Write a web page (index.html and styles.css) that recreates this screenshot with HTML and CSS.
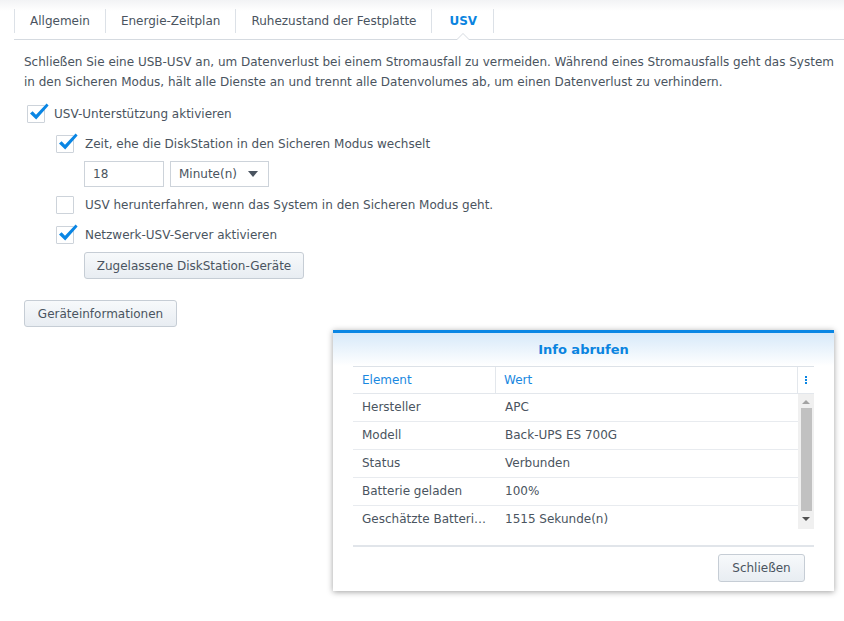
FILE: index.html
```html
<!DOCTYPE html>
<html lang="de">
<head>
<meta charset="utf-8">
<title>USV</title>
<link rel="stylesheet" href="styles.css">
</head>
<body>
<div class="page">
  <nav class="tabs">
    <div class="tab">Allgemein</div>
    <div class="tab">Energie-Zeitplan</div>
    <div class="tab">Ruhezustand der Festplatte</div>
    <div class="tab active">USV</div>
  </nav>
  <main class="content">
    <p class="desc">Schließen Sie eine USB-USV an, um Datenverlust bei einem Stromausfall zu vermeiden. Während eines Stromausfalls geht das System in den Sicheren Modus, hält alle Dienste an und trennt alle Datenvolumes ab, um einen Datenverlust zu verhindern.</p>

    <div class="row lvl0">
      <span class="cb checked"><svg class="tick" viewBox="0 0 22 20" width="22" height="20"><path d="M2 10.5 L4.6 8.3 L8 11.8 L18.6 0.6 L20.6 2.4 L8.2 16.6 Z"/></svg></span>
      <span class="lbl">USV-Unterstützung aktivieren</span>
    </div>
    <div class="row lvl1">
      <span class="cb checked"><svg class="tick" viewBox="0 0 22 20" width="22" height="20"><path d="M2 10.5 L4.6 8.3 L8 11.8 L18.6 0.6 L20.6 2.4 L8.2 16.6 Z"/></svg></span>
      <span class="lbl">Zeit, ehe die DiskStation in den Sicheren Modus wechselt</span>
    </div>
    <div class="fields">
      <div class="input">18</div>
      <div class="select"><span>Minute(n)</span><span class="caret"></span></div>
    </div>
    <div class="row lvl1">
      <span class="cb"></span>
      <span class="lbl">USV herunterfahren, wenn das System in den Sicheren Modus geht.</span>
    </div>
    <div class="row lvl1">
      <span class="cb checked"><svg class="tick" viewBox="0 0 22 20" width="22" height="20"><path d="M2 10.5 L4.6 8.3 L8 11.8 L18.6 0.6 L20.6 2.4 L8.2 16.6 Z"/></svg></span>
      <span class="lbl">Netzwerk-USV-Server aktivieren</span>
    </div>
    <div class="btnrow lvl1b">
      <button class="btn">Zugelassene DiskStation-Geräte</button>
    </div>
    <div class="btnrow main-btn">
      <button class="btn">Geräteinformationen</button>
    </div>
  </main>

  <section class="dialog">
    <header class="dlg-head">Info abrufen</header>
    <div class="grid">
      <div class="grid-head">
        <div class="c1">Element</div>
        <div class="c2">Wert</div>
        <div class="c3"><span class="dots"><i></i><i></i><i></i></span></div>
      </div>
      <div class="grid-body">
        <div class="rows">
          <div class="gr"><div class="c1">Hersteller</div><div class="c2">APC</div></div>
          <div class="gr"><div class="c1">Modell</div><div class="c2">Back-UPS ES 700G</div></div>
          <div class="gr"><div class="c1">Status</div><div class="c2">Verbunden</div></div>
          <div class="gr"><div class="c1">Batterie geladen</div><div class="c2">100%</div></div>
          <div class="gr"><div class="c1">Geschätzte Batterielaufzeit</div><div class="c2">1515 Sekunde(n)</div></div>
        </div>
        <div class="sbar">
          <span class="arr up"></span>
          <span class="thumb"></span>
          <span class="arr down"></span>
        </div>
      </div>
    </div>
    <footer class="dlg-foot">
      <button class="btn close">Schließen</button>
    </footer>
  </section>
</div>
</body>
</html>
```

FILE: styles.css
```css
html, body {
  margin: 0;
  padding: 0;
}
body {
  width: 844px;
  height: 621px;
  overflow: hidden;
  font-family: "DejaVu Sans", Verdana, sans-serif;
  font-size: 12px;
  color: #4a5460;
  background: #fff linear-gradient(#f2f3f5 0, #fff 11px) no-repeat;
}
.page {
  position: relative;
  height: 621px;
}

/* Tabs */
.tabs {
  display: flex;
  margin-left: 14px;
  border-bottom: 1px solid #d5dae0;
  padding-top: 9px;
  box-sizing: border-box;
  height: 40px;
}
.tab {
  position: relative;
  height: 24px;
  line-height: 24px;
  padding: 0 15px;
  border-left: 1px solid #dce1e7;
  color: #4a5460;
  white-space: nowrap;
}
.tab:last-child {
  border-right: 1px solid #dce1e7;
  padding: 0 16px 0 17px;
}
.tab.active {
  color: #0a84e0;
  font-weight: bold;
}
.tab.active::before,
.tab.active::after {
  content: "";
  position: absolute;
  left: 50%;
  width: 0;
  height: 0;
  border-style: solid;
}
.tab.active::before {
  bottom: -7px;
  margin-left: -7px;
  border-width: 0 7px 7px 7px;
  border-color: transparent transparent #d5dae0 transparent;
}
.tab.active::after {
  bottom: -7px;
  margin-left: -6px;
  border-width: 0 6px 6px 6px;
  border-color: transparent transparent #fff transparent;
}

/* Content */
.content {
  padding: 12px 24px 0 24px;
}
.desc {
  margin: 0;
  line-height: 20px;
  width: 812px;
}
.row {
  display: flex;
  align-items: center;
  height: 30px;
}
.row.lvl0 {
  margin-top: 7px;
  padding-left: 3px;
}
.row.lvl0 .lbl {
  margin-left: 9px;
}
.row.lvl1 {
  padding-left: 32px;
}
.fields {
  display: flex;
  gap: 6px;
  padding-left: 60px;
  margin-top: 2px;
  height: 26px;
  margin-bottom: 3px;
}
.cb {
  position: relative;
  box-sizing: border-box;
  width: 18px;
  height: 18px;
  border: 1px solid #cdd3da;
  border-radius: 1px;
  background: #fff;
  flex: none;
}
.tick {
  position: absolute;
  left: 0;
  top: -3px;
}
.tick path {
  fill: #0a86e4;
}
.lbl {
  margin-left: 11px;
  white-space: nowrap;
}
.input, .select {
  box-sizing: border-box;
  height: 26px;
  border: 1px solid #cdd3da;
  line-height: 24px;
  padding-left: 8px;
  background: #fff;
}
.input {
  width: 80px;
}
.select {
  width: 99px;
  display: flex;
  align-items: center;
  justify-content: space-between;
  padding-right: 10px;
}
.caret {
  width: 0;
  height: 0;
  border-style: solid;
  border-width: 6px 5px 0 5px;
  border-color: #4a5460 transparent transparent transparent;
}
.btnrow {
  display: flex;
}
.btnrow.lvl1b {
  padding-left: 60px;
  margin-top: 2px;
}
.btnrow.main-btn {
  margin-top: 21px;
}
.btn {
  box-sizing: border-box;
  height: 27px;
  padding: 0;
  white-space: nowrap;
  font-family: inherit;
  font-size: 12px;
  color: #4a5460;
  border: 1px solid #c6cdd5;
  border-radius: 3px;
  background: linear-gradient(#f7f9fb, #e8edf2);
  cursor: pointer;
}
.btnrow.lvl1b .btn {
  width: 220px;
}
.btnrow.main-btn .btn {
  width: 153px;
}

/* Dialog */
.dialog {
  position: absolute;
  left: 333px;
  top: 330px;
  width: 501px;
  height: 261px;
  box-sizing: border-box;
  border-top: 3px solid #0a86e4;
  background: #fff;
  box-shadow: 0 1px 6px rgba(0, 0, 0, 0.38);
  padding: 0 20px;
}
.dlg-head {
  margin: 0 -20px;
  height: 33px;
  line-height: 33px;
  text-align: center;
  font-weight: bold;
  font-size: 13px;
  color: #0a84e0;
  background: linear-gradient(#d7e9f9, #fff);
}
.grid {
  border-top: 1px solid #dde2e8;
}
.grid-head {
  display: flex;
  height: 26px;
  line-height: 26px;
  border-bottom: 1px solid #e3e7ec;
  color: #1a88e0;
}
.grid-head .c1 {
  box-sizing: border-box;
  width: 143px;
  padding-left: 9px;
  border-right: 1px solid #e3e7ec;
}
.grid-head .c2 {
  flex: 1;
  padding-left: 8px;
  border-right: 1px solid #e3e7ec;
}
.grid-head .c3 {
  width: 16px;
  display: flex;
  justify-content: center;
  align-items: center;
}
.dots {
  display: flex;
  flex-direction: column;
  gap: 1px;
}
.dots i {
  display: block;
  width: 2px;
  height: 2px;
  background: #0a86e4;
}
.grid-body {
  display: flex;
  height: 135px;
  overflow: hidden;
}
.rows {
  flex: 1;
  min-width: 0;
}
.gr {
  display: flex;
  height: 28px;
  line-height: 27px;
  border-bottom: 1px solid #e8ebef;
  box-sizing: border-box;
}
.gr .c1 {
  box-sizing: border-box;
  width: 143px;
  flex: none;
  padding-left: 9px;
  padding-right: 9px;
  white-space: nowrap;
  overflow: hidden;
  text-overflow: ellipsis;
}
.gr .c2 {
  flex: 1;
  padding-left: 9px;
  white-space: nowrap;
}
.sbar {
  position: relative;
  width: 16px;
  background: #f0f0f0;
  display: flex;
  flex-direction: column;
  align-items: center;
}
.arr {
  width: 0;
  height: 0;
  border-style: solid;
}
.arr.up {
  border-width: 0 4px 4px 4px;
  border-color: transparent transparent #a3a3a3 transparent;
  margin-top: 6px;
  margin-bottom: 4px;
}
.arr.down {
  border-width: 4px 4px 0 4px;
  border-color: #505050 transparent transparent transparent;
  margin-top: 6px;
}
.thumb {
  width: 11px;
  height: 103px;
  background: #c1c1c1;
}
.dlg-foot {
  margin-top: 16px;
  border-top: 2px solid #e1e5ea;
  display: flex;
  justify-content: flex-end;
  padding-top: 7px;
  padding-right: 9px;
}
.btn.close {
  width: 87px;
  height: 28px;
  padding: 0;
}
```
